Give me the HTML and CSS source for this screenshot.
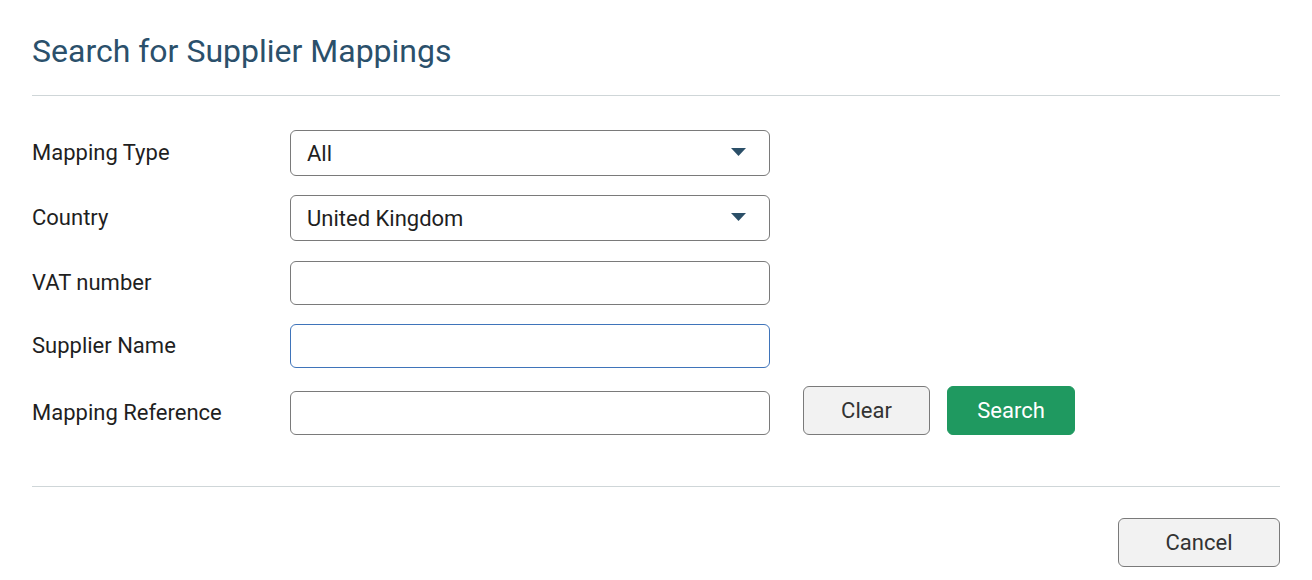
FILE: index.html
```html
<!DOCTYPE html>
<html lang="en">
<head>
<meta charset="utf-8">
<title>Search for Supplier Mappings</title>
<link rel="stylesheet" href="styles.css">
</head>
<body>
<div class="dialog">
  <h1 class="title">Search for Supplier Mappings</h1>
  <hr class="divider">
  <form class="form">
    <div class="row">
      <label class="label" for="mtype">Mapping Type</label>
      <div class="select-wrap">
        <select id="mtype" class="field select"><option>All</option></select>
        <svg class="caret" width="15" height="8" viewBox="0 0 15 8"><path d="M0 0h15L7.5 8z" fill="#2b4f68"/></svg>
      </div>
    </div>
    <div class="row">
      <label class="label" for="country">Country</label>
      <div class="select-wrap">
        <select id="country" class="field select"><option>United Kingdom</option></select>
        <svg class="caret" width="15" height="8" viewBox="0 0 15 8"><path d="M0 0h15L7.5 8z" fill="#2b4f68"/></svg>
      </div>
    </div>
    <div class="row row-text">
      <label class="label" for="vat">VAT number</label>
      <input id="vat" class="field input" type="text">
    </div>
    <div class="row">
      <label class="label" for="sname">Supplier Name</label>
      <input id="sname" class="field input focused" type="text">
    </div>
    <div class="row row-last">
      <label class="label" for="mref">Mapping Reference</label>
      <input id="mref" class="field input" type="text">
      <div class="actions">
        <button type="button" class="btn btn-secondary btn-clear">Clear</button>
        <button type="button" class="btn btn-primary btn-search">Search</button>
      </div>
    </div>
  </form>
  <hr class="divider divider-bottom">
  <div class="footer">
    <button type="button" class="btn btn-secondary btn-cancel">Cancel</button>
  </div>
</div>
</body>
</html>
```

FILE: styles.css
```css
* { box-sizing: border-box; }

html, body {
  margin: 0;
  padding: 0;
  background: #ffffff;
}

body {
  font-family: Roboto, "Liberation Sans", Arial, sans-serif;
  color: #1f1f1f;
}

.dialog {
  padding: 0 32px;
}

.title {
  margin: 32px 0 0;
  font-size: 32px;
  line-height: 38px;
  font-weight: 400;
  color: #2b506b;
}

.divider {
  margin: 25px 0 0;
  border: 0;
  height: 1px;
  background: #cfd6d8;
}

.form {
  margin-top: 34px;
  display: flex;
  flex-direction: column;
  gap: 19px;
}

.row {
  display: flex;
  align-items: center;
}

.row-text {
  margin-top: 1px;
}

.row-last {
  align-items: flex-start;
  margin-top: -1px;
}

.row-last .label {
  margin-top: 14px;
}

.row-last .input {
  margin-top: 5px;
}

.label {
  width: 258px;
  flex: none;
  font-size: 22px;
  line-height: 26px;
  color: #1f1f1f;
}

.field {
  width: 480px;
  border: 1px solid #7a7a7a;
  border-radius: 6px;
  background: #ffffff;
  font-family: inherit;
  font-size: 22px;
  color: #1f1f1f;
  padding: 0 16px;
  margin: 0;
  outline: none;
}

.select-wrap {
  position: relative;
  width: 480px;
}

.select {
  appearance: none;
  -webkit-appearance: none;
  height: 46px;
  display: block;
}

.caret {
  position: absolute;
  right: 24px;
  top: 18px;
  pointer-events: none;
}

.input {
  height: 44px;
  display: block;
}

.focused {
  border-color: #3f74ba;
}

.actions {
  display: flex;
  gap: 17px;
  margin-left: 33px;
}

.btn {
  height: 49px;
  border-radius: 6px;
  font-family: inherit;
  font-size: 22px;
  cursor: pointer;
  padding: 0;
}

.btn-secondary {
  background: #f2f2f2;
  border: 1px solid #7a7a7a;
  color: #333333;
}

.btn-primary {
  background: #1f9960;
  border: 1px solid #1f9960;
  color: #ffffff;
}

.btn-clear { width: 127px; }
.btn-search { width: 128px; }

.divider-bottom {
  margin-top: 51px;
}

.footer {
  display: flex;
  justify-content: flex-end;
  margin-top: 31px;
}

.btn-cancel {
  width: 162px;
}
```
